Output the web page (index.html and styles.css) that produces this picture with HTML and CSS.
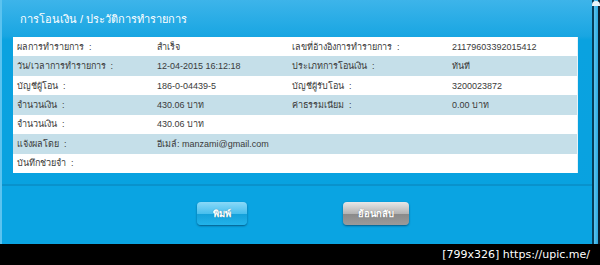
FILE: index.html
```html
<!DOCTYPE html>
<html lang="th">
<head>
    <meta charset="UTF-8">
    <meta name="viewport" content="width=device-width, initial-scale=1.0">
    <title>การโอนเงิน / ประวัติการทำรายการ</title>
    <link rel="stylesheet" href="styles.css">
</head>
<body>
    <div class="screen">
        <div class="dialog">
            <h2 class="dialog-title">การโอนเงิน / ประวัติการทำรายการ</h2>

            <div class="details">
                <div class="row">
                    <span>ผลการทำรายการ&nbsp; :</span>
                    <span>สำเร็จ</span>
                    <span>เลขที่อ้างอิงการทำรายการ&nbsp; :</span>
                    <span>21179603392015412</span>
                </div>
                <div class="row alt">
                    <span>วัน/เวลาการทำรายการ&nbsp; :</span>
                    <span>12-04-2015 16:12:18</span>
                    <span>ประเภทการโอนเงิน&nbsp; :</span>
                    <span>ทันที</span>
                </div>
                <div class="row">
                    <span>บัญชีผู้โอน&nbsp; :</span>
                    <span>186-0-04439-5</span>
                    <span>บัญชีผู้รับโอน&nbsp; :</span>
                    <span>3200023872</span>
                </div>
                <div class="row alt">
                    <span>จำนวนเงิน&nbsp; :</span>
                    <span>430.06 บาท</span>
                    <span>ค่าธรรมเนียม&nbsp; :</span>
                    <span>0.00 บาท</span>
                </div>
                <div class="row">
                    <span>จำนวนเงิน&nbsp; :</span>
                    <span>430.06 บาท</span>
                </div>
                <div class="row alt">
                    <span>แจ้งผลโดย&nbsp; :</span>
                    <span>อีเมล์: manzami@gmail.com</span>
                </div>
                <div class="row">
                    <span>บันทึกช่วยจำ&nbsp; :</span>
                    <span></span>
                </div>
            </div>

            <div class="dialog-footer">
                <button class="btn btn-print">พิมพ์</button>
                <button class="btn btn-back">ย้อนกลับ</button>
            </div>
        </div>
        <div class="side">
            <span class="side-knob"></span>
        </div>
    </div>
    <div class="caption">[799x326] https://upic.me/</div>
</body>
</html>
```

FILE: styles.css
```css
body {
    margin: 0;
    background-color: #000;
    font-family: "Liberation Sans", Arial, sans-serif;
    width: 600px;
    height: 265px;
    overflow: hidden;
}

.screen {
    display: flex;
    height: 244px;
}

.dialog {
    width: 590px;
    display: flex;
    flex-direction: column;
    background: linear-gradient(#3db4ea, #19a6e2 36px, #0aa2e0 40px, #08a2e0);
    border-left: 2px solid #5cc3ef;
}

.dialog-title {
    margin: 0;
    height: 37px;
    padding-left: 18px;
    line-height: 39px;
    color: #fff;
    font-size: 11px;
    font-weight: normal;
}

.details {
    margin: 0 14px 0 11px;
    background: #fff;
    border-right: 1px solid #e6f3f8;
}

.row {
    display: grid;
    grid-template-columns: 140px 135px 160px 1fr;
    height: 19.43px;
    align-items: center;
    padding-left: 4px;
    font-size: 9px;
    color: #3a3a3a;
}

.row.alt {
    background: #c5dfe9;
}

.dialog-footer {
    flex: 1;
    margin-top: 11px;
    border-top: 2px solid #0992cc;
    display: flex;
    align-items: center;
    gap: 96px;
    padding-left: 195px;
    padding-bottom: 2px;
    background: #0aa4e2;
}

.btn {
    height: 23px;
    border: none;
    border-radius: 4px;
    color: #fff;
    font-family: inherit;
    font-size: 9.5px;
    font-weight: bold;
    padding: 0;
    box-shadow: 0 1px 2px rgba(0, 40, 70, 0.6);
    text-shadow: 0 0 1px rgba(0, 0, 0, 0.4);
}

.btn-print {
    width: 50px;
    background: linear-gradient(#8ad9f8, #49bfee 50%, #14a0da 52%, #22b3ea);
}

.btn-back {
    width: 66px;
    background: linear-gradient(#e8e8e8, #b4b4b4 50%, #8a8a8a 52%, #9a9a9a);
}

.side {
    flex: 1;
    position: relative;
    background: linear-gradient(90deg, #053e5a 0, #053e5a 2px, #5cc3ef 2px, #2aa9e0 6px, #0c2030 6px);
}

.side-knob {
    position: absolute;
    top: 1px;
    left: 0;
    width: 8px;
    height: 5px;
    border-radius: 4px 4px 0 0;
    background: #e8f4fa;
}

.caption {
    height: 21px;
    line-height: 21px;
    text-align: right;
    padding-right: 10px;
    color: #fff;
    font-family: "DejaVu Sans", sans-serif;
    font-size: 11px;
}
```
